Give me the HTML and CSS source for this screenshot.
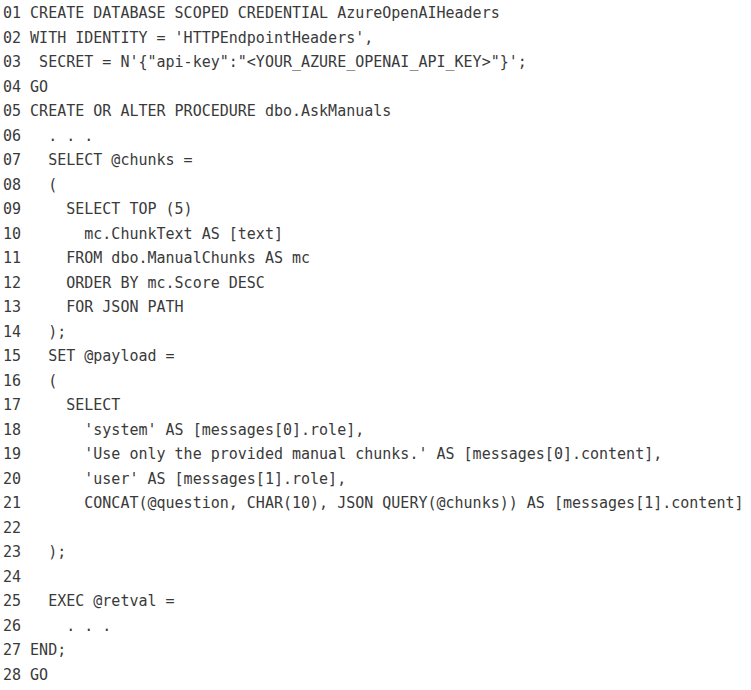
FILE: index.html
```html
<!DOCTYPE html>
<html lang="en">
<head>
<meta charset="utf-8">
<title>AskManuals</title>
<link rel="stylesheet" href="styles.css">
</head>
<body>
<div class="listing">
<div class="line"><span class="num">01</span> CREATE DATABASE SCOPED CREDENTIAL AzureOpenAIHeaders</div>
<div class="line"><span class="num">02</span> WITH IDENTITY = 'HTTPEndpointHeaders',</div>
<div class="line"><span class="num">03</span>  SECRET = N'{"api-key":"&lt;YOUR_AZURE_OPENAI_API_KEY&gt;"}';</div>
<div class="line"><span class="num">04</span> GO</div>
<div class="line"><span class="num">05</span> CREATE OR ALTER PROCEDURE dbo.AskManuals</div>
<div class="line"><span class="num">06</span>   . . .</div>
<div class="line"><span class="num">07</span>   SELECT @chunks =</div>
<div class="line"><span class="num">08</span>   (</div>
<div class="line"><span class="num">09</span>     SELECT TOP (5)</div>
<div class="line"><span class="num">10</span>       mc.ChunkText AS [text]</div>
<div class="line"><span class="num">11</span>     FROM dbo.ManualChunks AS mc</div>
<div class="line"><span class="num">12</span>     ORDER BY mc.Score DESC</div>
<div class="line"><span class="num">13</span>     FOR JSON PATH</div>
<div class="line"><span class="num">14</span>   );</div>
<div class="line"><span class="num">15</span>   SET @payload =</div>
<div class="line"><span class="num">16</span>   (</div>
<div class="line"><span class="num">17</span>     SELECT</div>
<div class="line"><span class="num">18</span>       'system' AS [messages[0].role],</div>
<div class="line"><span class="num">19</span>       'Use only the provided manual chunks.' AS [messages[0].content],</div>
<div class="line"><span class="num">20</span>       'user' AS [messages[1].role],</div>
<div class="line"><span class="num">21</span>       CONCAT(@question, CHAR(10), JSON QUERY(@chunks)) AS [messages[1].content]</div>
<div class="line"><span class="num">22</span></div>
<div class="line"><span class="num">23</span>   );</div>
<div class="line"><span class="num">24</span></div>
<div class="line"><span class="num">25</span>   EXEC @retval =</div>
<div class="line"><span class="num">26</span>     . . .</div>
<div class="line"><span class="num">27</span> END;</div>
<div class="line"><span class="num">28</span> GO</div>
</div>
</body>
</html>
```
FILE: styles.css
```css
html, body {
  margin: 0;
  padding: 0;
  background: #ffffff;
}

.listing {
  padding: 1px 0 0 3px;
  font-family: "DejaVu Sans Mono", "Liberation Mono", monospace;
  font-size: 15px;
  line-height: 24.5px;
  color: #3a3a3a;
}

.line {
  white-space: pre;
  height: 24.5px;
}

.num {
  color: #3a3a3a;
}
```
